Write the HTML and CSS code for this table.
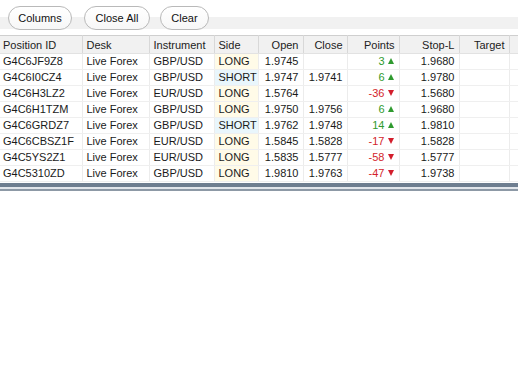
FILE: index.html
```html
<!DOCTYPE html>
<html>
<head>
<meta charset="utf-8">
<link rel="stylesheet" href="styles.css">
</head>
<body>
<div class="toolbar">
  <button class="btn b-columns">Columns</button>
  <button class="btn b-close">Close All</button>
  <button class="btn b-clear">Clear</button>
</div>
<table class="grid">
  <colgroup>
    <col style="width:82px"><col style="width:67px"><col style="width:65px"><col style="width:44px"><col style="width:45px"><col style="width:44px"><col style="width:52px"><col style="width:60px"><col style="width:50px"><col>
  </colgroup>
  <thead>
    <tr><th>Position ID</th><th>Desk</th><th>Instrument</th><th>Side</th><th class="r">Open</th><th class="r">Close</th><th class="r">Points</th><th class="r">Stop-L</th><th class="r">Target</th><th class="fill"></th></tr>
  </thead>
  <tbody>
    <tr><td>G4C6JF9Z8</td><td>Live Forex</td><td>GBP/USD</td><td class="long">LONG</td><td class="r">1.9745</td><td class="r"></td><td class="r up">3<span class="tri-up"></span></td><td class="r">1.9680</td><td></td><td class="fill"></td></tr>
    <tr><td>G4C6I0CZ4</td><td>Live Forex</td><td>GBP/USD</td><td class="short">SHORT</td><td class="r">1.9747</td><td class="r">1.9741</td><td class="r up">6<span class="tri-up"></span></td><td class="r">1.9780</td><td></td><td class="fill"></td></tr>
    <tr><td>G4C6H3LZ2</td><td>Live Forex</td><td>EUR/USD</td><td class="long">LONG</td><td class="r">1.5764</td><td class="r"></td><td class="r down">-36<span class="tri-down"></span></td><td class="r">1.5680</td><td></td><td class="fill"></td></tr>
    <tr><td>G4C6H1TZM</td><td>Live Forex</td><td>GBP/USD</td><td class="long">LONG</td><td class="r">1.9750</td><td class="r">1.9756</td><td class="r up">6<span class="tri-up"></span></td><td class="r">1.9680</td><td></td><td class="fill"></td></tr>
    <tr><td>G4C6GRDZ7</td><td>Live Forex</td><td>GBP/USD</td><td class="short">SHORT</td><td class="r">1.9762</td><td class="r">1.9748</td><td class="r up">14<span class="tri-up"></span></td><td class="r">1.9810</td><td></td><td class="fill"></td></tr>
    <tr><td>G4C6CBSZ1F</td><td>Live Forex</td><td>EUR/USD</td><td class="long">LONG</td><td class="r">1.5845</td><td class="r">1.5828</td><td class="r down">-17<span class="tri-down"></span></td><td class="r">1.5828</td><td></td><td class="fill"></td></tr>
    <tr><td>G4C5YS2Z1</td><td>Live Forex</td><td>EUR/USD</td><td class="long">LONG</td><td class="r">1.5835</td><td class="r">1.5777</td><td class="r down">-58<span class="tri-down"></span></td><td class="r">1.5777</td><td></td><td class="fill"></td></tr>
    <tr><td>G4C5310ZD</td><td>Live Forex</td><td>GBP/USD</td><td class="long">LONG</td><td class="r">1.9810</td><td class="r">1.9763</td><td class="r down">-47<span class="tri-down"></span></td><td class="r">1.9738</td><td></td><td class="fill"></td></tr>
  </tbody>
</table>
<div class="bottombar"></div>
</body>
</html>
```
FILE: styles.css
```css
html, body {
  margin: 0;
  padding: 0;
  background: #ffffff;
  font-family: "Liberation Sans", Arial, sans-serif;
  font-size: 11px;
  color: #1a1a1a;
}
.toolbar {
  height: 35px;
  box-sizing: border-box;
  padding: 6px 0 0 8px;
  display: flex;
  align-items: flex-start;
  background: linear-gradient(to bottom, #ffffff 0, #ffffff 17px, #f1f1f1 17px, #f1f1f1 29px, #ffffff 29px);
}
.btn {
  height: 24px;
  box-sizing: border-box;
  border: 1px solid #b9b9b9;
  border-radius: 12px;
  background: linear-gradient(to bottom, #ffffff, #f7f7f7);
  font-family: "Liberation Sans", Arial, sans-serif;
  font-size: 11px;
  color: #111;
  padding: 0;
  margin: 0;
}
.b-columns { width: 64px; margin-right: 12px; }
.b-close { width: 66px; margin-right: 10px; }
.b-clear { width: 49px; }
.grid {
  border-collapse: collapse;
  table-layout: fixed;
  width: 518px;
}
.grid th {
  height: 18px;
  box-sizing: border-box;
  padding: 0 4px;
  font-weight: normal;
  text-align: left;
  background: #f1f1f1;
  border-top: 1px solid #cfcfcf;
  border-right: 1px solid #d8d8d8;
  border-bottom: 1px solid #e2e2e2;
  color: #222;
  white-space: nowrap;
  overflow: hidden;
}
.grid th:first-child, .grid td:first-child { padding-left: 3px; }
.grid td {
  height: 16px;
  box-sizing: border-box;
  padding: 0 4px;
  line-height: 15px;
  border-bottom: 1px solid #efefef;
  border-right: 1px solid #ececec;
  white-space: nowrap;
  overflow: hidden;
}
.grid .r { text-align: right; }
.grid th.fill, .grid td.fill { border-right: none; }
.grid td.fill { border-left: 1px solid #e4e4e4; }
.grid td.long { background: #fffbe8; }
.grid td.short { background: #e9f6fc; }
.grid td.up { color: #2f9a2f; }
.grid td.down { color: #d31e2c; }
.tri-up, .tri-down {
  display: inline-block;
  width: 0;
  height: 0;
  margin-left: 3px;
  margin-right: 1px;
  vertical-align: 1px;
  border-left: 3px solid transparent;
  border-right: 3px solid transparent;
}
.tri-up { border-bottom: 6px solid #2f9a2f; }
.tri-down { border-top: 6px solid #d31e2c; }
.bottombar {
  height: 8px;
  margin-top: 1px;
  box-sizing: border-box;
  border-top: 4px solid #6e7e90;
  border-bottom: 2px solid #8d99a6;
  background: #e2e6eb;
}
```
